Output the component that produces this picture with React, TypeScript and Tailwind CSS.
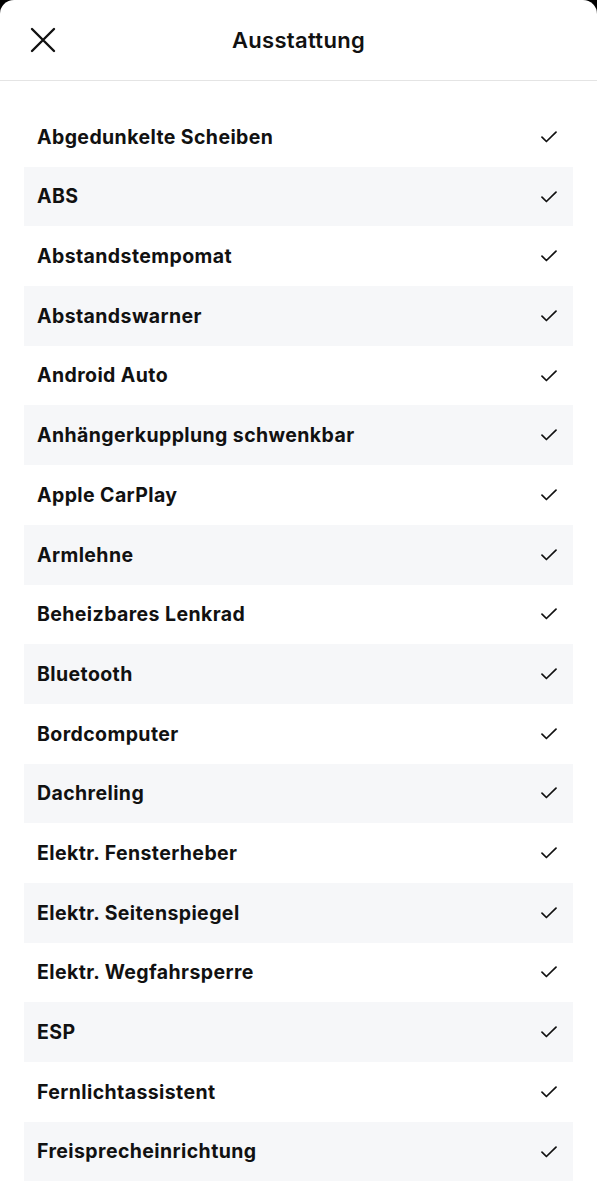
import React from 'react';

const items = [
  'Abgedunkelte Scheiben',
  'ABS',
  'Abstandstempomat',
  'Abstandswarner',
  'Android Auto',
  'Anhängerkupplung schwenkbar',
  'Apple CarPlay',
  'Armlehne',
  'Beheizbares Lenkrad',
  'Bluetooth',
  'Bordcomputer',
  'Dachreling',
  'Elektr. Fensterheber',
  'Elektr. Seitenspiegel',
  'Elektr. Wegfahrsperre',
  'ESP',
  'Fernlichtassistent',
  'Freisprecheinrichtung',
];

function CloseIcon() {
  return (
    <svg width="26" height="26" viewBox="0 0 26 26" fill="none">
      <path d="M2 2L24 24M24 2L2 24" stroke="#111" strokeWidth="2.4" strokeLinecap="round" />
    </svg>
  );
}

function CheckIcon() {
  return (
    <svg width="16" height="12" viewBox="0 0 16 12" fill="none">
      <path d="M1 6.2L5.4 10.5L15 1.2" stroke="#111" strokeWidth="1.7" strokeLinecap="round" strokeLinejoin="round" />
    </svg>
  );
}

export default function App() {
  return (
    <div className="bg-black min-h-[1200px]" style={{ fontFamily: 'Inter, "Noto Sans", sans-serif' }}>
      <div className="bg-white rounded-t-[14px] min-h-[1200px] overflow-hidden">
        <header className="relative h-[81px] flex items-center justify-center border-b border-[#e4e4e4]">
          <button className="absolute left-[30px] top-[27px]">
            <CloseIcon />
          </button>
          <h1 className="text-[22px] font-semibold text-[#111] tracking-[0.3px]">Ausstattung</h1>
        </header>
        <ul className="px-6 pt-[26px] pb-4">
          {items.map((item, i) => (
            <li
              key={item}
              className={`h-[59.7px] flex items-center justify-between pl-[13px] pr-[16px] ${
                i % 2 === 1 ? 'bg-[#f6f7f9]' : ''
              }`}
            >
              <span className="text-[19.5px] font-bold text-[#111] tracking-[0.4px] pt-[1px]">{item}</span>
              <CheckIcon />
            </li>
          ))}
        </ul>
      </div>
    </div>
  );
}
